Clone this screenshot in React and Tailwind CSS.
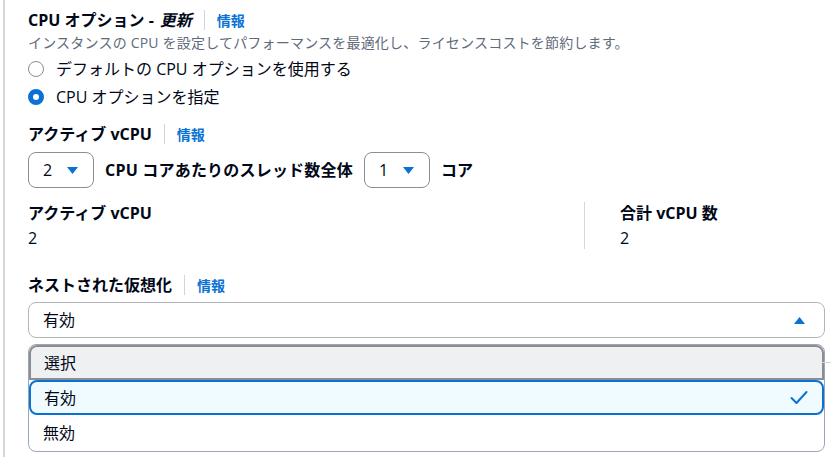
import React from "react";

const font = { fontFamily: '"Open Sans", "Noto Sans CJK JP", sans-serif' };

const InfoLabel = ({ children }) => (
  <div className="flex h-[22px] items-center text-[16px] font-bold text-[#000716]">
    <span>{children}</span>
    <span className="mx-[12px] h-[20px] w-px bg-[#d1d5db]" />
    <span className="text-[14px] font-bold text-[#0972d3]">情報</span>
  </div>
);

const Caret = ({ up }) => (
  <svg width="13" height="9" viewBox="0 0 13 9" className="shrink-0">
    {up ? (
      <path d="M1 8 L6.5 1 L12 8 Z" fill="#0972d3" />
    ) : (
      <path d="M1 1 L12 1 L6.5 8 Z" fill="#0972d3" />
    )}
  </svg>
);

const SmallSelect = ({ value }) => (
  <div className="flex h-[36px] w-[66px] items-center gap-[14px] rounded-[8px] border border-[#8c8c94] bg-white pl-[14px] text-[16px] font-normal text-[#000716]">
    <span>{value}</span>
    <Caret />
  </div>
);

const Radio = ({ checked, children }) => (
  <label className="flex h-[28px] items-center gap-[12px] text-[16px] text-[#000716]">
    {checked ? (
      <span className="h-[16px] w-[16px] rounded-full border-[5px] border-[#0972d3] bg-white" />
    ) : (
      <span className="h-[16px] w-[16px] rounded-full border-[1.5px] border-[#8c8c94] bg-white" />
    )}
    <span>{children}</span>
  </label>
);

export default function App() {
  return (
    <div className="h-[457px] w-[831px] overflow-hidden bg-white" style={font}>
      <div className="ml-[3px] h-full border-l-[2px] border-[#d5d7db] pl-[23px] pr-[5px] pt-[9px]">
        <div className="flex h-[22px] items-center text-[16px] font-bold text-[#000716]">
          <span>CPU オプション -</span>
          <span className="ml-[6px] italic">更新</span>
          <span className="mx-[12px] h-[20px] w-px bg-[#d1d5db]" />
          <span className="text-[14px] font-bold text-[#0972d3]">情報</span>
        </div>
        <p className="mt-[2px] text-[14px] leading-[20px] tracking-[0.2px] text-[#5f6b7a]">
          インスタンスの CPU を設定してパフォーマンスを最適化し、ライセンスコストを節約します。
        </p>
        <div className="mt-[2px] flex flex-col">
          <Radio>デフォルトの CPU オプションを使用する</Radio>
          <Radio checked>CPU オプションを指定</Radio>
        </div>

        <div className="mt-[12px]">
          <InfoLabel>アクティブ vCPU</InfoLabel>
        </div>
        <div className="mt-[7px] flex items-center gap-[11px] text-[16px] font-bold text-[#000716]">
          <SmallSelect value="2" />
          <span className="tracking-[0.2px]">CPU コアあたりのスレッド数全体</span>
          <SmallSelect value="1" />
          <span>コア</span>
        </div>

        <div className="mt-[14px] flex text-[16px] text-[#000716]">
          <div className="w-[556px] leading-[22px]">
            <div className="font-bold">アクティブ vCPU</div>
            <div className="mt-[3px]">2</div>
          </div>
          <div className="flex">
            <div className="h-[47px] w-px bg-[#d5d7db]" />
            <div className="pl-[35px] leading-[22px]">
              <div className="font-bold">合計 vCPU 数</div>
              <div className="mt-[3px]">2</div>
            </div>
          </div>
        </div>

        <div className="mt-[25px]">
          <InfoLabel>ネストされた仮想化</InfoLabel>
        </div>
        <div className="mt-[6px] flex h-[36px] w-[797px] items-center justify-between rounded-[8px] border border-[#b4b4bb] bg-white pl-[14px] pr-[18px] text-[16px] text-[#000716]">
          <span>有効</span>
          <Caret up />
        </div>

        <div className="relative mt-[6px] w-[797px] text-[16px] text-[#000716]">
          <div className="absolute right-[-6px] top-[18px] h-px w-[10px] bg-[#d5d7db]" />
          <div className="rounded-[8px] border border-[#9ba7b6] bg-white">
            <div className="flex h-[35px] items-center rounded-t-[8px] border-[2px] border-[#8c8c94] bg-[#eef0f2] pl-[13px]">
              選択
            </div>
            <div className="flex h-[35px] items-center justify-between rounded-[8px] border-[2px] border-[#0972d3] bg-[#f0fbff] pl-[13px] pr-[14px]">
              <span>有効</span>
              <svg width="18" height="15" viewBox="0 0 18 15">
                <path d="M1.5 8 L6.5 13 L16.5 2" fill="none" stroke="#0972d3" strokeWidth="2" strokeLinecap="round" strokeLinejoin="round" />
              </svg>
            </div>
            <div className="flex h-[36px] items-center pl-[14px]">無効</div>
          </div>
        </div>
      </div>
    </div>
  );
}
